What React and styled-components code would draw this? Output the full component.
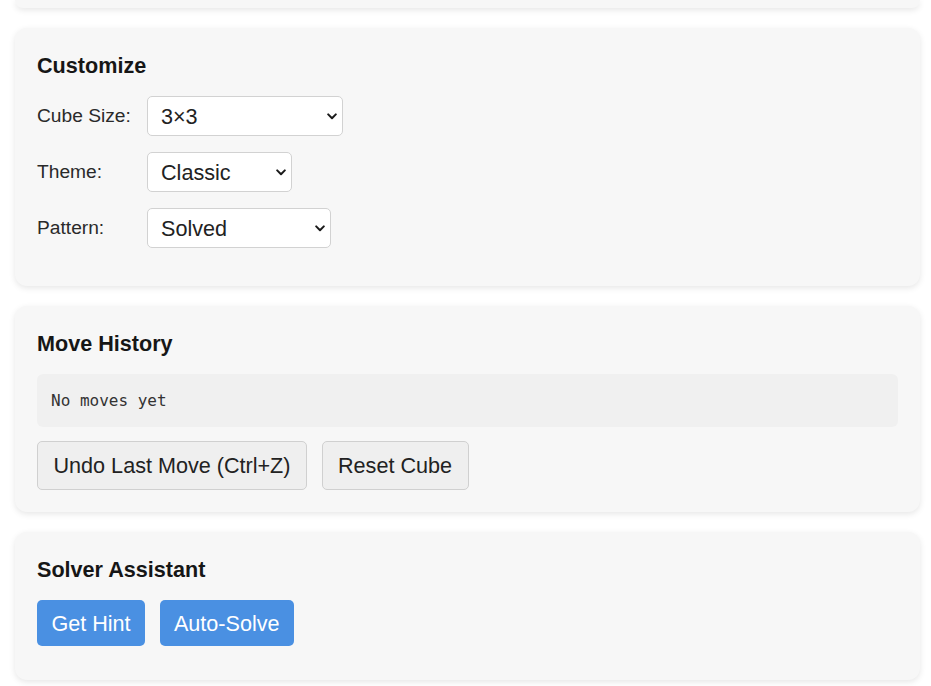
import styled, { createGlobalStyle } from 'styled-components';

const GlobalStyle = createGlobalStyle`
    html, body {
        margin: 0;
        padding: 0;
        background: #ffffff;
    }
    body {
        font-family: "Liberation Sans", Arial, sans-serif;
        color: #222;
    }
`

const Page = styled.div`
    display: flex;
    flex-direction: column;
    gap: 20px;
    padding: 0 11px 20px 15px;
`

const Card = styled.section`
    background-color: #f7f7f7;
    border-radius: 12px;
    box-shadow: 0 2px 6px rgba(0, 0, 0, 0.1);
    padding: 22px 22px ${p => (p.$extra ? '34px' : '22px')};
`

// the bottom of the panel above, scrolled out of view
const CardStub = styled.div`
    height: 8px;
    background-color: #f7f7f7;
    border-radius: 0 0 12px 12px;
    box-shadow: 0 2px 6px rgba(0, 0, 0, 0.1);
`

const CardTitle = styled.h3`
    margin: 3px 0 18px;
    font-size: 21.6px;
    font-weight: 700;
    color: #161616;
    line-height: 25px;
`

const Row = styled.div`
    display: flex;
    align-items: center;
    margin-bottom: 16px;
`

const Label = styled.label`
    width: 110px;
    flex-shrink: 0;
    font-size: 19.2px;
    color: #2a2a2a;
`

const SelectWrap = styled.div`
    position: relative;
    width: ${p => p.$w}px;
`

const Select = styled.select`
    appearance: none;
    -webkit-appearance: none;
    display: block;
    width: 100%;
    height: 40px;
    padding: 0 30px 0 13px;
    font-family: "Liberation Sans", Arial, sans-serif;
    font-size: 21.6px;
    color: #222;
    background-color: #fff;
    border: 1px solid #d2d2d2;
    border-radius: 5px;
`

const Chevron = styled.svg`
    position: absolute;
    right: 6px;
    top: 50%;
    width: 10px;
    height: 7px;
    margin-top: -3px;
    pointer-events: none;
`

const MoveList = styled.div`
    background-color: #f0f0f0;
    border-radius: 6px;
    padding: 17px 14px;
    font-family: "DejaVu Sans Mono", "Liberation Mono", monospace;
    font-size: 16px;
    line-height: 19px;
    color: #333;
    margin-bottom: 14px;
`

const ButtonRow = styled.div`
    display: flex;
    gap: 14.5px;
`

const Button = styled.button`
    font-family: "Liberation Sans", Arial, sans-serif;
    font-size: 21.6px;
    line-height: 25px;
    padding: ${p => (p.$primary ? '10.5px 14.4px' : '11px 15.5px')};
    border-radius: 5px;
    cursor: pointer;
    color: ${p => (p.$primary ? '#fff' : '#222')};
    background-color: ${p => (p.$primary ? '#4a90e2' : '#efefef')};
    border: ${p => (p.$primary ? 'none' : '1px solid #d0d0d0')};
`

function Dropdown({ width, value, options }) {
    return (
        <SelectWrap $w={width}>
            <Select defaultValue={value}>
                {options.map(o => (
                    <option key={o.value} value={o.value}>{o.label}</option>
                ))}
            </Select>
            <Chevron viewBox="0 0 10 7">
                <path d="M1.2 1.4 L5 5.2 L8.8 1.4" fill="none" stroke="#1a1a1a" strokeWidth="2" strokeLinecap="round" strokeLinejoin="round" />
            </Chevron>
        </SelectWrap>
    );
}

function App() {
    return (
        <>
            <GlobalStyle />
            <Page>
                <CardStub />

                <Card>
                    <CardTitle>Customize</CardTitle>
                    <Row>
                        <Label>Cube Size:</Label>
                        <Dropdown width={196} value="3" options={[
                            { value: '2', label: '2×2' },
                            { value: '3', label: '3×3' },
                            { value: '4', label: '4×4' },
                        ]} />
                    </Row>
                    <Row>
                        <Label>Theme:</Label>
                        <Dropdown width={145} value="classic" options={[
                            { value: 'classic', label: 'Classic' },
                            { value: 'neon', label: 'Neon' },
                        ]} />
                    </Row>
                    <Row>
                        <Label>Pattern:</Label>
                        <Dropdown width={184} value="solved" options={[
                            { value: 'solved', label: 'Solved' },
                            { value: 'checker', label: 'Checkerboard' },
                        ]} />
                    </Row>
                </Card>

                <Card>
                    <CardTitle>Move History</CardTitle>
                    <MoveList>No moves yet</MoveList>
                    <ButtonRow>
                        <Button>Undo Last Move (Ctrl+Z)</Button>
                        <Button>Reset Cube</Button>
                    </ButtonRow>
                </Card>

                <Card $extra>
                    <CardTitle>Solver Assistant</CardTitle>
                    <ButtonRow>
                        <Button $primary>Get Hint</Button>
                        <Button $primary>Auto-Solve</Button>
                    </ButtonRow>
                </Card>
            </Page>
        </>
    );
}

export default App;
